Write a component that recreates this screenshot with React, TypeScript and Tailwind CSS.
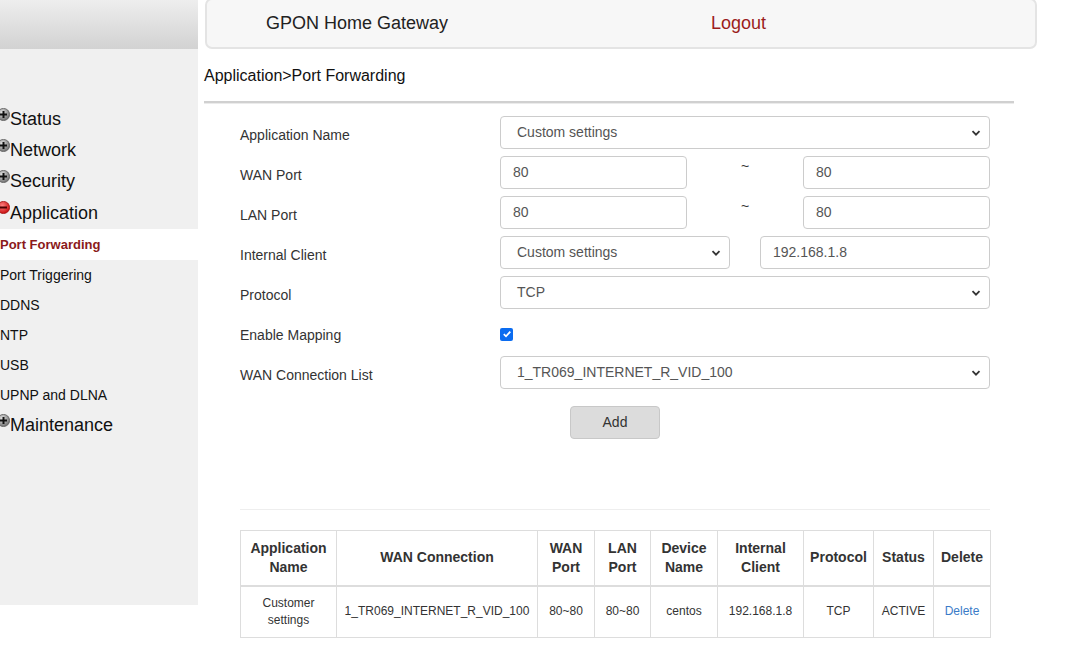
import React from "react";

const Plus = ({ red }: { red?: boolean }) => (
  <svg width="13" height="13" viewBox="0 0 13 13" className="ml-[-3px] mt-[4px] self-start shrink-0">
    <defs>
      <radialGradient id={red ? "gr" : "gg"} cx="40%" cy="35%" r="65%">
        <stop offset="0%" stopColor={red ? "#ff8080" : "#e8e8e8"} />
        <stop offset="100%" stopColor={red ? "#c81010" : "#707070"} />
      </radialGradient>
    </defs>
    <circle cx="6.5" cy="6.5" r="6.1" fill={`url(#${red ? "gr" : "gg"})`} stroke={red ? "#a00c0c" : "#5a5a5a"} strokeWidth="0.8" />
    <rect x="3" y="5.5" width="7" height="2" fill={red ? "#4a0000" : "#111"} />
    {!red && <rect x="5.5" y="3" width="2" height="7" fill="#111" />}
  </svg>
);

const Chevron = () => (
  <svg width="10" height="10" viewBox="0 0 10 10" className="absolute right-[9px] top-1/2 -translate-y-1/2 pointer-events-none">
    <path d="M1.5 3.2 L5 6.7 L8.5 3.2" fill="none" stroke="#333" strokeWidth="1.8" />
  </svg>
);

const Select = ({ value, w }: { value: string; w: string }) => (
  <div className={`relative ${w} h-[33px]`}>
    <div className="h-full w-full border border-[#cccccc] rounded-[4px] bg-white pl-[16px] flex items-center text-[14px] text-[#555]">
      {value}
    </div>
    <Chevron />
  </div>
);

const Input = ({ value, w }: { value: string; w: string }) => (
  <div className={`${w} h-[33px] border border-[#cccccc] rounded-[4px] bg-white pl-[12px] flex items-center text-[14px] text-[#555]`}>
    {value}
  </div>
);

const Row = ({ label, children }: { label: string; children: React.ReactNode }) => (
  <div className="flex items-center h-[33px]">
    <div className="w-[260px] text-[14px] text-[#333] pt-[5px]">{label}</div>
    <div className="flex items-start">{children}</div>
  </div>
);

export default function App() {
  const bigItem = "flex items-center h-[31px] text-[18px] text-[#111]";
  const subItem = "flex items-center h-[30px] text-[14px] text-[#111]";
  const th = "border border-[#dddddd] border-b-2 font-bold text-[14px] text-[#333] leading-[19px] text-center align-middle";
  const td = "border border-[#dddddd] text-[12px] text-[#333] text-center align-middle leading-[17px]";
  return (
    <div className="w-[1068px] h-[645px] overflow-hidden bg-white flex" style={{ fontFamily: '"Liberation Sans", Arial, sans-serif' }}>
      {/* Sidebar */}
      <div className="w-[198px] h-[605px] bg-[#f0f0f0] shrink-0 flex flex-col">
        <div className="h-[49px] bg-gradient-to-b from-[#eeeeee] to-[#d2d2d2]" />
        <div className="pt-[55px] flex flex-col">
          <div className={bigItem}><Plus /><span>Status</span></div>
          <div className={bigItem}><Plus /><span>Network</span></div>
          <div className={bigItem}><Plus /><span>Security</span></div>
          <div className={`${bigItem} h-[32px] text-[#9b1c1c]`}><Plus red /><span>Application</span></div>
          <div className="flex items-center h-[31px] bg-white text-[13px] font-bold text-[#8b1a1a]">Port Forwarding</div>
          <div className={subItem}>Port Triggering</div>
          <div className={subItem}>DDNS</div>
          <div className={subItem}>NTP</div>
          <div className={subItem}>USB</div>
          <div className={subItem}>UPNP and DLNA</div>
          <div className={`${bigItem} h-[29px]`}><Plus /><span>Maintenance</span></div>
        </div>
      </div>

      {/* Main */}
      <div className="ml-[6px] flex flex-col">
        <div className="ml-[1px] w-[832px] h-[51px] -mt-[2px] border-2 border-[#e4e4e4] rounded-[7px] bg-[#f7f7f7] flex items-center pb-[1px]">
          <div className="w-[504px] pl-[59px] text-[18px] text-[#222]">GPON Home Gateway</div>
          <div className="text-[18px] text-[#9b1c1c]">Logout</div>
        </div>
        <div className="h-[52px] flex items-center text-[16px] text-[#111] pt-[1px]">Application&gt;Port Forwarding</div>
        <div className="w-[810px] h-[3px] border-t-2 border-[#d0d0d0] bg-[#ebebeb]" />

        <div className="pl-[36px] pt-[12px] flex flex-col gap-[7px]">
          <Row label="Application Name"><Select value="Custom settings" w="w-[490px]" /></Row>
          <Row label="WAN Port">
            <Input value="80" w="w-[187px]" />
            <div className="w-[116px] text-center text-[14px] text-[#333] leading-[16px] pt-[2px]">~</div>
            <Input value="80" w="w-[187px]" />
          </Row>
          <Row label="LAN Port">
            <Input value="80" w="w-[187px]" />
            <div className="w-[116px] text-center text-[14px] text-[#333] leading-[16px] pt-[2px]">~</div>
            <Input value="80" w="w-[187px]" />
          </Row>
          <Row label="Internal Client">
            <Select value="Custom settings" w="w-[230px]" />
            <div className="w-[30px]" />
            <Input value="192.168.1.8" w="w-[230px]" />
          </Row>
          <Row label="Protocol"><Select value="TCP" w="w-[490px]" /></Row>
          <Row label="Enable Mapping">
            <div className="w-[13px] h-[13px] rounded-[2px] bg-[#0b6cf0] flex items-center justify-center mt-[3px]">
              <svg width="10" height="10" viewBox="0 0 10 10"><path d="M1.8 5.2 L4 7.3 L8.3 2.6" fill="none" stroke="white" strokeWidth="1.8" /></svg>
            </div>
          </Row>
          <Row label="WAN Connection List"><Select value="1_TR069_INTERNET_R_VID_100" w="w-[490px]" /></Row>
          <div className="w-[750px] flex justify-center mt-[10px]">
            <div className="w-[90px] h-[33px] bg-[#dcdcdc] border border-[#c8c8c8] rounded-[4px] flex items-center justify-center text-[14px] text-[#333]">Add</div>
          </div>
          <div className="w-[750px] h-px bg-[#eeeeee] mt-[63px]" />
          <table className="mt-[13px] w-[750px] border-collapse table-fixed">
            <colgroup>
              <col className="w-[96px]" />
              <col className="w-[201px]" />
              <col className="w-[57px]" />
              <col className="w-[56px]" />
              <col className="w-[67px]" />
              <col className="w-[86px]" />
              <col className="w-[70px]" />
              <col className="w-[60px]" />
              <col className="w-[57px]" />
            </colgroup>
            <thead>
              <tr className="h-[55px]">
                <th className={th}>Application<br />Name</th>
                <th className={th}>WAN Connection</th>
                <th className={th}>WAN<br />Port</th>
                <th className={th}>LAN<br />Port</th>
                <th className={th}>Device<br />Name</th>
                <th className={th}>Internal<br />Client</th>
                <th className={th}>Protocol</th>
                <th className={th}>Status</th>
                <th className={th}>Delete</th>
              </tr>
            </thead>
            <tbody>
              <tr className="h-[52px]">
                <td className={td}>Customer<br />settings</td>
                <td className={td}>1_TR069_INTERNET_R_VID_100</td>
                <td className={td}>80~80</td>
                <td className={td}>80~80</td>
                <td className={td}>centos</td>
                <td className={td}>192.168.1.8</td>
                <td className={td}>TCP</td>
                <td className={td}>ACTIVE</td>
                <td className={td}><span className="text-[#3a7bc8]">Delete</span></td>
              </tr>
            </tbody>
          </table>
        </div>
      </div>
    </div>
  );
}
